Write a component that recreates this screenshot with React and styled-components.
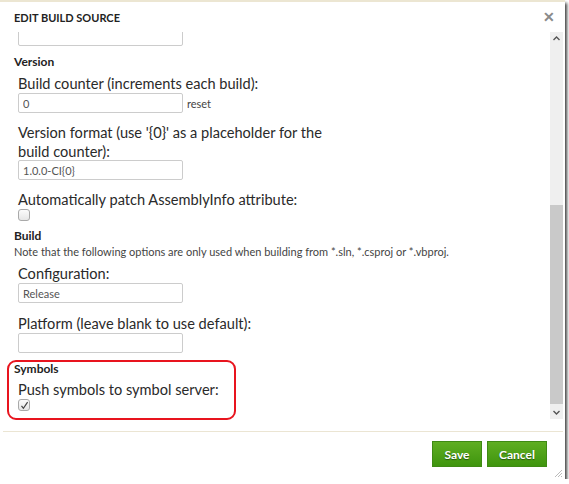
import styled, { createGlobalStyle } from 'styled-components'

const GlobalStyle = createGlobalStyle`
    html, body {
        margin: 0;
        background: #ffffff;
    }
    * {
        box-sizing: border-box;
    }
`

const Window = styled.div`
    width: 565px;
    height: 479px;
    display: flex;
    flex-direction: column;
    background: #ffffff;
    border-top: 2px solid #ece6d2;
    box-shadow: 2px 3px 3px rgba(0, 0, 0, 0.75);
    font-family: 'Segoe UI', Lato, 'Open Sans', sans-serif;
    color: #333333;
`

const Header = styled.div`
    height: 30px;
    flex: none;
    display: flex;
    align-items: center;
    justify-content: space-between;
    padding: 0 10px 0 14px;
`

const Title = styled.h1`
    margin: 0;
    font-size: 11px;
    font-weight: 700;
    color: #222222;
`

const Close = styled.span`
    font-size: 14px;
    font-weight: 700;
    color: #8a8a8a;
    line-height: 1;
`

const Body = styled.div`
    flex: 1;
    display: flex;
    min-height: 0;
`

const Content = styled.div`
    flex: 1;
    overflow: hidden;
    padding-left: 7px;
`

const Scrolled = styled.div`
    margin-top: -6px;
    display: flex;
    flex-direction: column;
    align-items: flex-start;
`

const Section = styled.div`
    margin-top: ${(props) => props.$top || 0}px;
    padding: ${(props) => (props.$highlight ? '0 5px 7px 5px' : '0 7px')};
    width: ${(props) => (props.$highlight ? '229px' : 'auto')};
    border: ${(props) => (props.$highlight ? '2px solid #e8141e' : 'none')};
    border-radius: 9px;
`

const SectionTitle = styled.h2`
    margin: 0;
    font-size: 12px;
    font-weight: 700;
    color: #222222;
    line-height: 14px;
`

const Note = styled.p`
    margin: 2px 0 0 0;
    font-size: 11px;
    color: #444444;
    line-height: 14px;
`

const Field = styled.div`
    padding-left: ${(props) => (props.$inner ? 4 : 11)}px;
    margin-top: ${(props) => props.$top || 0}px;
    display: flex;
    flex-direction: column;
    align-items: flex-start;
`

const Label = styled.label`
    font-size: 14.6px;
    line-height: 19px;
    color: #2a2a2a;
    max-width: ${(props) => (props.$wrap ? '320px' : 'none')};
    margin-bottom: ${(props) => (props.$wrap ? -1 : 0)}px;
`

const InputRow = styled.div`
    display: flex;
    align-items: center;
    gap: 4px;
`

const TextInput = styled.input`
    width: 165px;
    height: 20px;
    border: 1px solid #cccccc;
    border-radius: 2px;
    padding: 0 4px;
    font-family: 'Segoe UI', Lato, 'Open Sans', sans-serif;
    font-size: 11px;
    color: #555555;
    background: #ffffff;
    outline: none;
`

const SmallText = styled.span`
    font-size: 11px;
    color: #444444;
`

const Check = styled.span`
    width: 12px;
    height: 12px;
    border: 1px solid #a9a9a9;
    border-radius: 3px;
    background: linear-gradient(#fbfbfb, #e6e6e6);
    display: flex;
    align-items: center;
    justify-content: center;
`

const Scrollbar = styled.div`
    width: 13px;
    flex: none;
    margin: 0 2px 12px 0;
    display: flex;
    flex-direction: column;
    background: #efefef;
`

const Arrow = styled.div`
    height: 13px;
    display: flex;
    align-items: center;
    justify-content: center;
`

const Track = styled.div`
    flex: 1;
    display: flex;
    flex-direction: column;
    padding-top: 160px;
    padding-bottom: 2px;
`

const Thumb = styled.div`
    flex: 1;
    background: #c9c9c9;
`

const Footer = styled.div`
    flex: none;
    height: 48px;
    margin: 0 2px 0 3px;
    border-top: 1px solid #ebe5d3;
    display: flex;
    justify-content: flex-end;
    align-items: flex-start;
    gap: 5px;
    padding: 9px 16px 0 0;
    position: relative;
`

const Button = styled.button`
    height: 26px;
    min-width: ${(props) => props.$width}px;
    padding: 0 10px;
    border: 1px solid #3f8a14;
    background: linear-gradient(#5fae22, #3f950e);
    color: #ffffff;
    font-family: 'Segoe UI', Lato, 'Open Sans', sans-serif;
    font-size: 12px;
    font-weight: 700;
    text-shadow: 0 1px 1px rgba(0, 0, 0, 0.45);
    cursor: pointer;
`

const Grip = styled.svg`
    position: absolute;
    right: 0;
    bottom: 1px;
`

const CheckBox = ({ checked }) => (
    <Check>
        {checked && (
            <svg width='9' height='9' viewBox='0 0 9 9'>
                <path
                    d='M1.5 4.8 L3.4 7.3 L7.6 1.2'
                    fill='none'
                    stroke='#444'
                    strokeWidth='1.2'
                />
            </svg>
        )}
    </Check>
)

const versionFormatLabel = "Version format (use '{0}' as a placeholder for the build counter):"

const App = () => {
    return (
        <>
            <GlobalStyle />
            <Window>
                <Header>
                    <Title>EDIT BUILD SOURCE</Title>
                    <Close>✕</Close>
                </Header>
                <Body>
                    <Content>
                        <Scrolled>
                            <Field>
                                <TextInput readOnly defaultValue='' />
                            </Field>
                            <Section $top={9}>
                                <SectionTitle>Version</SectionTitle>
                            </Section>
                            <Field $top={5}>
                                <Label>Build counter (increments each build):</Label>
                                <InputRow>
                                    <TextInput readOnly defaultValue='0' />
                                    <SmallText>reset</SmallText>
                                </InputRow>
                            </Field>
                            <Field $top={10}>
                                <Label $wrap>{versionFormatLabel}</Label>
                                <TextInput readOnly defaultValue='1.0.0-CI{0}' />
                            </Field>
                            <Field $top={10}>
                                <Label>Automatically patch AssemblyInfo attribute:</Label>
                                <CheckBox />
                            </Field>
                            <Section $top={8}>
                                <SectionTitle>Build</SectionTitle>
                                <Note>
                                    Note that the following options are only used when building from *.sln, *.csproj or *.vbproj.
                                </Note>
                            </Section>
                            <Field $top={5}>
                                <Label>Configuration:</Label>
                                <TextInput readOnly defaultValue='Release' />
                            </Field>
                            <Field $top={11}>
                                <Label>Platform (leave blank to use default):</Label>
                                <TextInput readOnly defaultValue='' />
                            </Field>
                            <Section $highlight $top={7}>
                                <SectionTitle>Symbols</SectionTitle>
                                <Field $inner $top={4}>
                                    <Label>Push symbols to symbol server:</Label>
                                    <CheckBox checked />
                                </Field>
                            </Section>
                        </Scrolled>
                    </Content>
                    <Scrollbar>
                        <Arrow>
                            <svg width='7' height='5' viewBox='0 0 7 5'>
                                <path d='M0.5 4 L3.5 1 L6.5 4' fill='none' stroke='#555' strokeWidth='1.4' />
                            </svg>
                        </Arrow>
                        <Track>
                            <Thumb />
                        </Track>
                        <Arrow>
                            <svg width='7' height='5' viewBox='0 0 7 5'>
                                <path d='M0.5 1 L3.5 4 L6.5 1' fill='none' stroke='#555' strokeWidth='1.4' />
                            </svg>
                        </Arrow>
                    </Scrollbar>
                </Body>
                <Footer>
                    <Button $width={50}>Save</Button>
                    <Button $width={60}>Cancel</Button>
                    <Grip width='10' height='10' viewBox='0 0 10 10'>
                        <path d='M9 2 L2 9 M9 5 L5 9 M9 8 L8 9' stroke='#bbb' strokeWidth='1' />
                    </Grip>
                </Footer>
            </Window>
        </>
    )
}

export default App
